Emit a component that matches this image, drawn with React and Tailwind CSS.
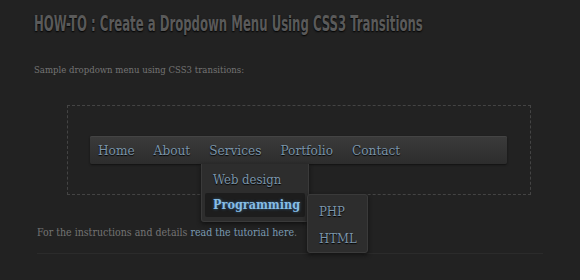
import React from "react";

const serif = { fontFamily: '"DejaVu Serif Condensed", "DejaVu Serif", serif' };

export default function App() {
  return (
    <div className="w-[580px] h-[280px] bg-[#222222] overflow-hidden relative" style={serif}>
      <h1
        className="absolute left-[34px] top-[10px] text-[21px] leading-[28px] text-[#5a5a5a] origin-left scale-x-[0.62] whitespace-nowrap font-bold [text-shadow:0_1px_2px_#000]"
        style={{ fontFamily: '"DejaVu Sans Condensed", "DejaVu Sans", sans-serif' }}
      >
        HOW-TO : Create a Dropdown Menu Using CSS3 Transitions
      </h1>
      <div className="pt-[62px] pl-[34px] text-[9.5px] leading-[16px] text-[#747474]">
        Sample dropdown menu using CSS3 transitions:
      </div>
      <div className="ml-[67px] mt-[27px] w-[464px] h-[90px] border border-dashed border-[#444] pt-[30px] pl-[22px]">
        <div className="relative w-[417px] h-[28px] rounded-[2px] bg-gradient-to-b from-[#3b3b3b] to-[#2d2d2d] shadow-[0_1px_2px_#111,inset_0_1px_0_#444] flex items-center pl-[8px] gap-[19px] text-[13.5px] text-[#7b95aa] [text-shadow:0_1px_1px_#000]">
          <span>Home</span>
          <span>About</span>
          <span>Services</span>
          <span>Portfolio</span>
          <span>Contact</span>
          <div className="absolute left-[111px] top-[28px] w-[108px] h-[58px] bg-[#2d2d2d] border border-t-0 border-[#3a3a3a] rounded-b-[3px] shadow-[0_2px_4px_#111] p-[3px] flex flex-col">
            <div className="h-[26px] flex items-center pl-[8px] text-[13px] text-[#7b95aa]">Web design</div>
            <div className="h-[24px] flex items-center pl-[8px] bg-[#1d1d1d] rounded-[2px] text-[12.5px] font-bold text-[#86bde6] [text-shadow:0_0_3px_#3a6a90]">Programming</div>
          </div>
          <div className="absolute left-[217px] top-[58px] w-[61px] h-[59px] bg-[#2d2d2d] border border-[#3a3a3a] rounded-[3px] shadow-[0_2px_4px_#111] flex flex-col pl-[11px] pt-[4px] text-[13px] text-[#7b95aa]">
            <div className="h-[26px] flex items-center">PHP</div>
            <div className="h-[28px] flex items-center">HTML</div>
          </div>
        </div>
      </div>
      <div className="pl-[37px] mt-[29px] text-[10.5px] leading-[16px] text-[#747474]">
        For the instructions and details <span className="text-[#7a9ab2]">read the tutorial here</span>.
      </div>
      <div className="ml-[37px] mt-[13px] w-[506px] border-t border-[#2b2b2b]"></div>
    </div>
  );
}
